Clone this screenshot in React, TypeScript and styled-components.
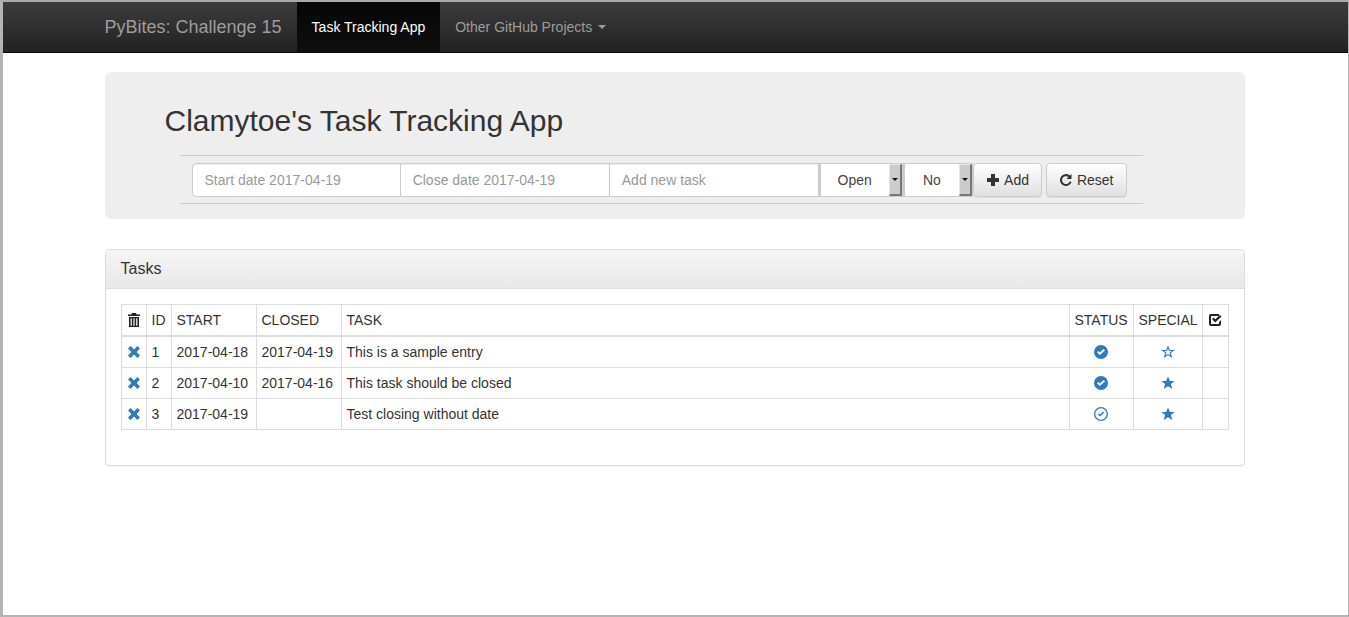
import styled, { createGlobalStyle } from "styled-components";

const GlobalStyle = createGlobalStyle`
  html, body {
    margin: 0;
    background: #fff;
    font-family: "Liberation Sans", Arial, sans-serif;
    font-size: 14px;
    line-height: 20px;
    color: #333;
  }
  * { box-sizing: border-box; }
`;

const Frame = styled.div`
  height: 617px;
  overflow: hidden;
  border-top: 2px solid #a9a9a9;
  border-left: 3px solid #b4b4b4;
  border-bottom: 2px solid #b4b4b4;
  border-right: 1px solid #b4b4b4;
`;

const Navbar = styled.nav`
  height: 51px;
  background: linear-gradient(to bottom, #3c3c3c 0, #222 100%);
  border-bottom: 1px solid #080808;
`;

const Container = styled.div`
  width: 1140px;
  margin: 0 auto;
  transform: translateX(-1px);
`;

const NavInner = styled(Container)`
  display: flex;
  height: 50px;
`;

const Brand = styled.a`
  font-size: 18px;
  line-height: 50px;
  color: #9d9d9d;
  padding-right: 15px;
`;

const NavLink = styled.a<{ $active?: boolean }>`
  display: flex;
  align-items: center;
  gap: 6px;
  padding: 0 15px;
  color: ${(p) => (p.$active ? "#fff" : "#9d9d9d")};
  background: ${(p) => (p.$active ? "linear-gradient(to bottom, #060606 0, #0f0f0f 100%)" : "none")};
`;

const Caret = styled.span`
  width: 0;
  height: 0;
  border-top: 4px solid #9d9d9d;
  border-left: 4px solid transparent;
  border-right: 4px solid transparent;
`;

const Jumbotron = styled.section`
  height: 147px;
  margin-top: 19px;
  padding: 32px 60px 0;
  background: #eee;
  border-radius: 6px;
`;

const Title = styled.h1`
  margin: 0;
  font-size: 30px;
  font-weight: 500;
  line-height: 33px;
  color: #333;
`;

const FormBar = styled.form`
  display: flex;
  width: 963px;
  height: 49px;
  margin: 18px 0 0 15px;
  padding: 7px 12px 0;
  border-top: 1px solid #ccc;
  border-bottom: 1px solid #ccc;
`;

const TextField = styled.div<{ $first?: boolean }>`
  width: 210px;
  height: 34px;
  padding: 6px 12px;
  color: #999;
  background: #fff;
  border: 1px solid #ccc;
  border-left-width: ${(p) => (p.$first ? "1px" : "0")};
  border-radius: ${(p) => (p.$first ? "4px 0 0 4px" : "0")};
  box-shadow: inset 0 1px 1px rgba(0, 0, 0, 0.075);
`;

const SelectBox = styled.div<{ $width: number }>`
  display: flex;
  width: ${(p) => p.$width}px;
  height: 34px;
  background: #fff;
  border: 1px solid #ccc;
  border-left-width: 2px;
`;

const SelectText = styled.span`
  flex: 1;
  padding: 6px 0;
  text-align: center;
  color: #444;
`;

const SelectArrow = styled.span`
  display: flex;
  align-items: center;
  justify-content: center;
  width: 13px;
  background: #ccc;
  border-right: 2px solid #777;
  border-bottom: 2px solid #777;
  border-top: 1px solid #e8e8e8;
  border-left: 1px solid #e8e8e8;
  &::after {
    content: "";
    border-top: 3px solid #111;
    border-left: 3px solid transparent;
    border-right: 3px solid transparent;
  }
`;

const Button = styled.button<{ $width: number }>`
  display: flex;
  align-items: center;
  justify-content: center;
  gap: 4px;
  width: ${(p) => p.$width}px;
  height: 34px;
  margin-right: 4px;
  padding: 0;
  font: inherit;
  color: #333;
  background: linear-gradient(to bottom, #fff 0, #e0e0e0 100%);
  border: 1px solid #ccc;
  border-radius: 4px;
  box-shadow: inset 0 1px 0 rgba(255, 255, 255, 0.15), 0 1px 1px rgba(0, 0, 0, 0.075);
`;

const Panel = styled.section`
  height: 217px;
  margin-top: 30px;
  background: #fff;
  border: 1px solid #ddd;
  border-radius: 4px;
  box-shadow: 0 1px 1px rgba(0, 0, 0, 0.05);
`;

const PanelHeading = styled.h3`
  margin: 0;
  height: 39px;
  padding: 10px 15px;
  font-size: 16px;
  font-weight: 500;
  line-height: 18px;
  color: #333;
  background: linear-gradient(to bottom, #f5f5f5 0, #e8e8e8 100%);
  border-bottom: 1px solid #ddd;
  border-radius: 3px 3px 0 0;
`;

const PanelBody = styled.div`
  padding: 15px;
`;

const Table = styled.table`
  width: 100%;
  table-layout: fixed;
  border-collapse: collapse;
`;

const Col = styled.col<{ $width?: number }>`
  width: ${(p) => (p.$width ? `${p.$width}px` : "auto")};
`;

const Th = styled.th<{ $center?: boolean }>`
  padding: 5px;
  font-weight: 400;
  text-align: ${(p) => (p.$center ? "center" : "left")};
  white-space: nowrap;
  border: 1px solid #ddd;
  border-bottom-width: 2px;
`;

const Td = styled.td<{ $center?: boolean }>`
  height: 31px;
  padding: 5px;
  text-align: ${(p) => (p.$center ? "center" : "left")};
  white-space: nowrap;
  border: 1px solid #ddd;
`;

const Glyph = styled.svg<{ $color?: string; $size?: number }>`
  display: inline-block;
  width: ${(p) => p.$size ?? 14}px;
  height: ${(p) => p.$size ?? 14}px;
  vertical-align: -2px;
  fill: ${(p) => p.$color ?? "#337ab7"};
`;

const BLUE = "#337ab7";

function RemoveIcon() {
  return (
    <Glyph viewBox="0 0 14 14">
      <path d="M3.6 1 7 4.4 10.4 1 13 3.6 9.6 7 13 10.4 10.4 13 7 9.6 3.6 13 1 10.4 4.4 7 1 3.6Z" />
    </Glyph>
  );
}

function OkSign() {
  return (
    <Glyph viewBox="0 0 14 14">
      <path
        fillRule="evenodd"
        d="M7 0a7 7 0 1 1 0 14A7 7 0 0 1 7 0ZM3 7.2 5.8 10 11 5.4 9.6 4 5.8 7.4 4.4 5.9Z"
      />
    </Glyph>
  );
}

function OkCircle() {
  return (
    <Glyph viewBox="0 0 14 14">
      <path
        fillRule="evenodd"
        d="M7 0a7 7 0 1 1 0 14A7 7 0 0 1 7 0Zm0 1.3a5.7 5.7 0 1 0 0 11.4A5.7 5.7 0 0 0 7 1.3ZM3.9 7.2 6 9.4 10.2 5.6 9.2 4.6 6 7.4 4.9 6.2Z"
      />
    </Glyph>
  );
}

function Star({ empty }: { empty?: boolean }) {
  const outer = "M7 .5 8.9 5h4.8L9.9 8l1.4 5L7 10.2 2.7 13l1.4-5L.3 5h4.8Z";
  const inner = "M7 3.4 6 6.1H3.4l2.1 1.7-.8 2.8L7 9l2.3 1.6-.8-2.8 2.1-1.7H8Z";
  return (
    <Glyph viewBox="0 0 14 14">
      <path fillRule="evenodd" d={empty ? outer + inner : outer} />
    </Glyph>
  );
}

function TrashIcon() {
  return (
    <Glyph viewBox="0 0 14 14" $color="#222">
      <path
        fillRule="evenodd"
        d="M5 0h4l.6 1.5H13V3H1V1.5h3.4ZM2 4h10v10H2ZM3.6 5.2v7.6h1.2V5.2Zm2.8 0v7.6h1.2V5.2Zm2.8 0v7.6h1.2V5.2Z"
      />
    </Glyph>
  );
}

function CheckIcon() {
  return (
    <Glyph viewBox="0 0 14 14" $color="#222">
      <path
        fillRule="evenodd"
        d="M3 1h8v2H3.5A.5.5 0 0 0 3 3.5v7a.5.5 0 0 0 .5.5h7a.5.5 0 0 0 .5-.5V9l2-2v4a2 2 0 0 1-2 2H3a2 2 0 0 1-2-2V3a2 2 0 0 1 2-2ZM4 6l1.5-1.5L7.2 6.2 12 2l1.5 1.5-6.3 6Z"
      />
    </Glyph>
  );
}

function PlusIcon() {
  return (
    <Glyph viewBox="0 0 14 14" $color="#333">
      <path d="M5 1h4v4h4v4H9v4H5V9H1V5h4Z" />
    </Glyph>
  );
}

function RepeatIcon() {
  return (
    <Glyph viewBox="0 0 14 14" $color="#333">
      <path d="M7 1a6 6 0 0 1 3.8 1.4L12.5 1v5h-5l1.9-1.9A3.9 3.9 0 1 0 10.7 8.3l1.9.8A6 6 0 1 1 7 1Z" />
    </Glyph>
  );
}

type Task = {
  id: number;
  start: string;
  closed: string;
  task: string;
  done: boolean;
  special: boolean;
};

const tasks: Task[] = [
  { id: 1, start: "2017-04-18", closed: "2017-04-19", task: "This is a sample entry", done: true, special: false },
  { id: 2, start: "2017-04-10", closed: "2017-04-16", task: "This task should be closed", done: true, special: true },
  { id: 3, start: "2017-04-19", closed: "", task: "Test closing without date", done: false, special: true },
];

export default function App() {
  return (
    <>
      <GlobalStyle />
      <Frame>
        <Navbar>
          <NavInner>
            <Brand>PyBites: Challenge 15</Brand>
            <NavLink $active>Task Tracking App</NavLink>
            <NavLink>
              Other GitHub Projects <Caret />
            </NavLink>
          </NavInner>
        </Navbar>
        <Container>
          <Jumbotron>
            <Title>Clamytoe's Task Tracking App</Title>
            <FormBar>
              <TextField $first>Start date 2017-04-19</TextField>
              <TextField>Close date 2017-04-19</TextField>
              <TextField>Add new task</TextField>
              <SelectBox $width={84}>
                <SelectText>Open</SelectText>
                <SelectArrow />
              </SelectBox>
              <SelectBox $width={71}>
                <SelectText>No</SelectText>
                <SelectArrow />
              </SelectBox>
              <Button $width={69}>
                <PlusIcon /> Add
              </Button>
              <Button $width={81}>
                <RepeatIcon /> Reset
              </Button>
            </FormBar>
          </Jumbotron>
          <Panel>
            <PanelHeading>Tasks</PanelHeading>
            <PanelBody>
              <Table>
                <colgroup>
                  <Col $width={25} />
                  <Col $width={25} />
                  <Col $width={85} />
                  <Col $width={85} />
                  <Col />
                  <Col $width={64} />
                  <Col $width={69} />
                  <Col $width={26} />
                </colgroup>
                <thead>
                  <tr>
                    <Th $center><TrashIcon /></Th>
                    <Th>ID</Th>
                    <Th>START</Th>
                    <Th>CLOSED</Th>
                    <Th>TASK</Th>
                    <Th>STATUS</Th>
                    <Th>SPECIAL</Th>
                    <Th $center><CheckIcon /></Th>
                  </tr>
                </thead>
                <tbody>
                  {tasks.map((t) => (
                    <tr key={t.id}>
                      <Td $center><RemoveIcon /></Td>
                      <Td>{t.id}</Td>
                      <Td>{t.start}</Td>
                      <Td>{t.closed}</Td>
                      <Td>{t.task}</Td>
                      <Td $center>{t.done ? <OkSign /> : <OkCircle />}</Td>
                      <Td $center><Star empty={!t.special} /></Td>
                      <Td />
                    </tr>
                  ))}
                </tbody>
              </Table>
            </PanelBody>
          </Panel>
        </Container>
      </Frame>
    </>
  );
}
